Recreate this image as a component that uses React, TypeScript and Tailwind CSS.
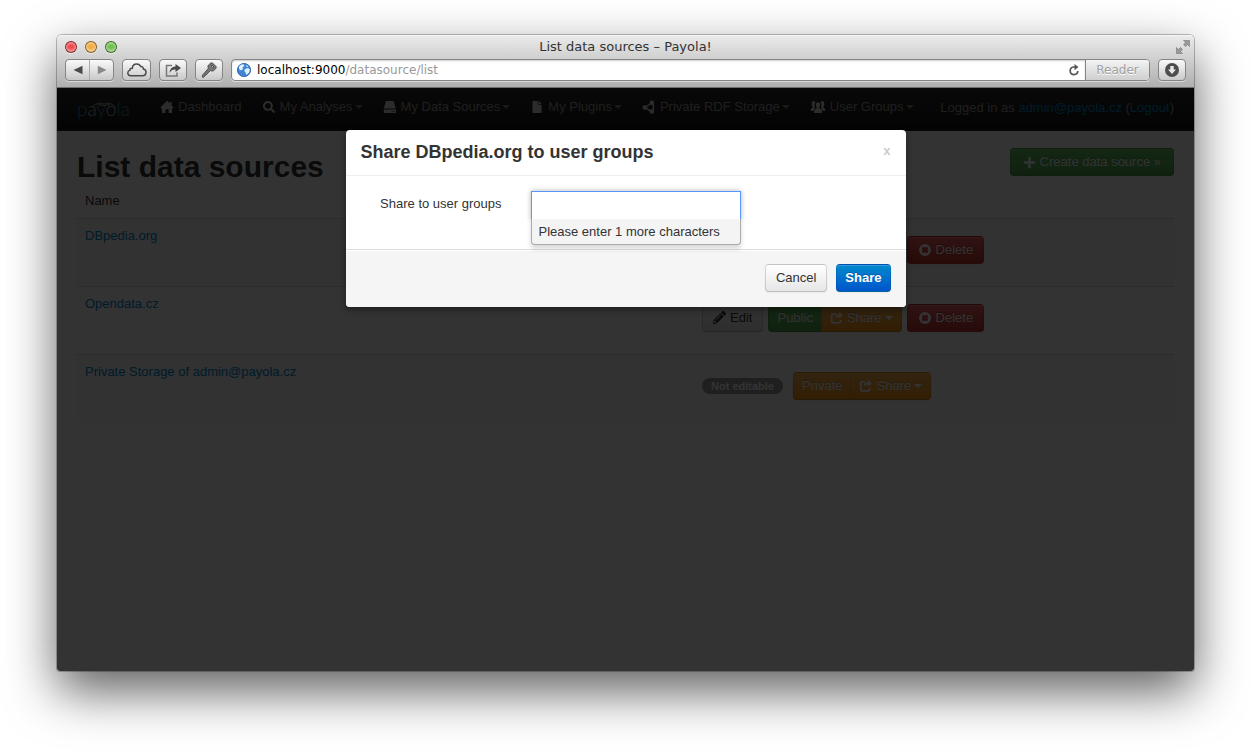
import React from "react";
import { FaSearch, FaFile, FaPlus, FaPencilAlt } from "react-icons/fa";

const toolButton =
  "flex h-[22px] shrink-0 items-center justify-center rounded-[4px] border border-[#848484] bg-linear-to-b from-[#fafafa] to-[#c9c9c9] text-[#4a4a4a] shadow-[0_1px_0_rgba(255,255,255,0.5)]";

const btn =
  "flex h-7 items-center whitespace-nowrap rounded-[4px] border border-black/10 border-b-black/25 leading-[18px] bg-linear-to-b shadow-[inset_0_1px_0_rgba(255,255,255,0.2),0_1px_2px_rgba(0,0,0,0.05)]";
const white = "text-white [text-shadow:0_-1px_0_rgba(0,0,0,0.25)]";
const plain = "px-[10px] from-white to-[#e6e6e6] text-[#333] border-black/15";
const green = "from-[#62c462] to-[#51a351] " + white;
const orange = "from-[#fbb450] to-[#f89406] " + white;
const red = "from-[#ee5f5b] to-[#bd362f] " + white;

function Caret() {
  return <span className="ml-[3px] border-x-4 border-t-4 border-x-transparent border-t-current" />;
}

function HomeIcon() {
  return (
    <svg viewBox="0 0 14 14" className="h-[14px] w-[14px]" fill="currentColor">
      <path d="M7 .8 9.800 3.600V1.800h1.800v3.600L13.600 7.400l-.9.900H12V13H8.600V9.200H5.400V13H2V8.300H1.300L.4 7.400z" />
    </svg>
  );
}

function DriveIcon() {
  return (
    <svg viewBox="0 0 14 14" className="h-[14px] w-[14px]" fill="currentColor">
      <path d="M3 1h7.500l2.300 7.500H.8z" />
      <path fillRule="evenodd" d="M.8 9.500h12.200v3.500H.8zM8.500 11v1h1v-1zM10.500 11v1h1v-1z" />
    </svg>
  );
}

function NodesIcon() {
  return (
    <svg viewBox="0 0 14 14" className="h-[14px] w-[14px]" fill="currentColor">
      <circle cx="2.800" cy="7.500" r="2.300" />
      <circle cx="9.800" cy="2.800" r="2.300" />
      <circle cx="9.800" cy="11.500" r="2.300" />
      <path d="m3 7.500 6.500-4.500M3 7.500l6.500 4M10.500 3q2.200 4.200 0 8.500" fill="none" stroke="currentColor" strokeWidth="1.500" />
    </svg>
  );
}

function GroupIcon() {
  return (
    <svg viewBox="0 0 16 14" className="h-[14px] w-4" fill="currentColor">
      <path d="M3.400 1.200c1 0 1.800.4 2.100 1.200C4.300 3.500 4.200 5.600 5 7l-.6.900c.8.600 1 .9.100 1.300-.9.400-1.300.8-1.300 1.800H.8V9.300c0-.8 1.600-.9 1.900-1.700.1-.6-.8-1.200-.9-3C1.700 2.300 2.200 1.200 3.400 1.200z" />
      <path d="M12.600 1.200c-1 0-1.800.4-2.100 1.200 1.200 1.100 1.300 3.200.5 4.600l.6.900c-.8.600-1 .9-.1 1.300.9.400 1.300.8 1.300 1.800h2.400V9.300c0-.8-1.600-.9-1.900-1.700-.1-.6.8-1.200.9-3 .1-2.300-.4-3.400-1.600-3.400z" />
      <path d="M8 2.300c1.500 0 2.200 1 2.100 2.600-.1 1.300-.8 2-.9 2.700-.2 1.300 2.700 1.500 2.700 3V13H4.100v-2.400c0-1.500 2.900-1.700 2.700-3-.1-.7-.8-1.400-.9-2.700C5.800 3.300 6.500 2.300 8 2.300z" />
    </svg>
  );
}

function ShareIcon() {
  return (
    <svg viewBox="0 0 14 14" className="h-[14px] w-[14px]">
      <path d="M6 2.800H3.200a1.500 1.500 0 0 0-1.500 1.500v6a1.500 1.500 0 0 0 1.500 1.500h6a1.500 1.500 0 0 0 1.500-1.500V9" fill="none" stroke="currentColor" strokeWidth="1.800" />
      <path d="M9 .8 12.800 4.300 9 7.800V5.600C7 5.600 5.700 6.500 4.800 8 4.800 5 6.300 3.200 9 3z" fill="currentColor" />
    </svg>
  );
}

function RemoveIcon() {
  return (
    <svg viewBox="0 0 14 14" className="h-[14px] w-[14px]" fill="currentColor">
      <path fillRule="evenodd" d="M7 1a6 6 0 1 0 0 12A6 6 0 0 0 7 1zM5.200 3.800 7 4.600l1.800-.8 1.400 1.400L9.400 7l.8 1.800-1.400 1.400L7 9.400l-1.800.8-1.400-1.400L4.600 7l-.8-1.800z" />
    </svg>
  );
}

function Logo() {
  return (
    <a href="#" className="relative mr-5 block w-[53px] font-['Lato',sans-serif] text-[19px] leading-[42px] font-light text-[#2d8da5]">
      p<span className="text-[#bbb]">a</span>y<span className="text-[#bbb]">o</span>la
      <svg viewBox="0 0 26 7" className="absolute top-[14px] left-[14px] h-[7px] w-[26px]" fill="none" stroke="#aaa">
        <path d="M1 5.500Q4 1.500 7.500 1.500q2.700-1.500 5.500.8 2.800-2.300 5.500-.8 3.500 0 6.500 4M7 3q3-1 6 .8 3-1.800 6-.8" />
      </svg>
    </a>
  );
}

type NavItem = { label: string; icon: React.ReactNode; menu?: boolean };
const nav: NavItem[] = [
  { label: "Dashboard", icon: <HomeIcon /> },
  { label: "My Analyses", icon: <FaSearch size={12} />, menu: true },
  { label: "My Data Sources", icon: <DriveIcon />, menu: true },
  { label: "My Plugins", icon: <FaFile size={12} />, menu: true },
  { label: "Private RDF Storage", icon: <NodesIcon />, menu: true },
  { label: "User Groups", icon: <GroupIcon />, menu: true },
];

function NavBar() {
  return (
    <nav className="flex h-[43px] items-start border-b border-[#252525] bg-linear-to-b from-[#2a2a2a] to-[#151515] px-5 text-[#999]">
      <Logo />
      <ul className="flex">
        {nav.map((item) => (
          <li key={item.label}>
            <a href="#" className="flex h-[38px] items-center whitespace-nowrap px-[10px]">
              <span className="mr-1 flex min-w-[14px] justify-center text-[#ddd]">{item.icon}</span>
              {item.label}
              {item.menu && <span className="ml-[2px] border-x-4 border-t-4 border-x-transparent border-t-[#777]" />}
            </a>
          </li>
        ))}
      </ul>
      <p className="ml-auto whitespace-nowrap leading-[40px]">
        Logged in as <a href="#" className="text-[#0088cc]">admin@payola.cz</a> (<a href="#" className="text-[#0088cc]">Logout</a>)
      </p>
    </nav>
  );
}

function ShareGroup({ label, tone }: { label: string; tone: string }) {
  return (
    <div className="flex">
      <button className={`${btn} ${tone} rounded-r-none border-r-0 px-2`}>{label}</button>
      <button className={`${btn} ${orange} rounded-l-none px-2`}>
        <span className="mr-[3px]"><ShareIcon /></span>Share<Caret />
      </button>
    </div>
  );
}

function DeleteButton() {
  return (
    <button className={`${btn} ${red} px-[10px]`}>
      <span className="mr-1"><RemoveIcon /></span>Delete
    </button>
  );
}

function SourceRow({ name, editable }: { name: string; editable: boolean }) {
  return (
    <tr className="h-[68px] border-t border-[#ddd] align-top odd:bg-[#f9f9f9]">
      <td className="p-2 leading-[18px]">
        <a href="#" className="text-[#0088cc]">{name}</a>
      </td>
      <td className="px-2 pt-[17px]">
        {editable ? (
          <div className="flex gap-[5px]">
            <button className={`${btn} ${plain}`}>
              <FaPencilAlt size={13} className="mr-1" />Edit
            </button>
            <ShareGroup label="Public" tone={green} />
            <DeleteButton />
          </div>
        ) : (
          <div className="flex items-center gap-[10px]">
            <span className="whitespace-nowrap rounded-full bg-[#999] px-[9px] text-[11px] leading-4 font-bold text-white">Not editable</span>
            <ShareGroup label="Private" tone={orange} />
          </div>
        )}
      </td>
    </tr>
  );
}

function ShareDialog() {
  return (
    <div role="dialog" aria-labelledby="share-title" className="absolute inset-x-0 top-[42px] mx-auto w-[560px] rounded-[4px] bg-white text-[#333] shadow-[0_3px_7px_rgba(0,0,0,0.4)]">
      <div className="flex justify-between border-b border-[#eee] px-[15px] py-[9px]">
        <h3 id="share-title" className="text-[18px] leading-[27px] font-bold">Share DBpedia.org to user groups</h3>
        <button className="h-6 text-[13px] leading-6 font-bold text-[#ccc]">x</button>
      </div>
      <div className="flex h-[73px] pt-[15px]">
        <label htmlFor="groups" className="w-[156px] text-right leading-[26px]">Share to user groups</label>
        <div className="relative ml-[29px] h-[30px] w-[210px]">
          <input id="groups" type="text" className="h-[30px] w-full border border-[#5897fb] bg-white px-1 shadow-[0_0_5px_rgba(0,0,0,0.3)] outline-none" />
          <div className="absolute inset-x-0 top-[28px] rounded-b-[4px] border border-t-0 border-[#aaa] bg-[#f4f4f4] px-[7px] pt-1 pb-[3px] leading-[18px] shadow-[0_4px_5px_rgba(0,0,0,0.15)]">
            Please enter 1 more characters
          </div>
        </div>
      </div>
      <div className="flex justify-end gap-[9px] rounded-b-[4px] border-t border-[#ddd] bg-[#f5f5f5] px-[15px] pt-[14px] pb-[15px] shadow-[inset_0_1px_0_#fff]">
        <button className={`${btn} ${plain}`}>Cancel</button>
        <button className={`${btn} ${white} from-[#0088cc] to-[#0055cc] px-2 font-bold`}>Share</button>
      </div>
    </div>
  );
}

function Light({ tone }: { tone: string }) {
  return <span className={`h-3 w-3 rounded-full border border-black/45 shadow-[inset_0_2px_2px_rgba(255,255,255,0.35),inset_0_-2px_2px_rgba(255,255,255,0.45),0_1px_0_rgba(255,255,255,0.5)] ${tone}`} />;
}

function BrowserChrome() {
  return (
    <header className="rounded-t-[5px] border-b border-[#6f6f6f] bg-linear-to-b from-[#ebebeb] to-[#b0b0b0] px-2 pb-[6px] font-['DejaVu_Sans',sans-serif] text-[12px] shadow-[inset_0_1px_0_#f6f6f6]">
      <div className="grid h-6 grid-cols-[1fr_auto_1fr] items-center">
        <div className="flex gap-2">
          <Light tone="bg-[#ee4b50]" />
          <Light tone="bg-[#f2ac43]" />
          <Light tone="bg-[#72bf51]" />
        </div>
        <h2 className="text-[13px] leading-5 text-[#333]">List data sources – Payola!</h2>
        <svg viewBox="0 0 14 14" className="-mr-1 h-[14px] w-[14px] justify-self-end" fill="#999" stroke="#777" strokeWidth=".6">
          <path d="M7.500.5h6v6l-2-2-2 2-2-2 2-2zM.5 13.500v-6l2 2 2-2 2 2-2 2 2 2z" />
        </svg>
      </div>
      <div className="flex gap-2">
        <div className={`${toolButton} w-[49px]`}>
          <button aria-label="Back" className="flex h-full flex-1 items-center justify-center border-r border-[#aaa]">
            <svg viewBox="0 0 10 10" className="h-[10px] w-[10px]" fill="currentColor"><path d="M9.500.8v8.400L.5 5z" /></svg>
          </button>
          <button aria-label="Forward" className="flex h-full flex-1 items-center justify-center text-[#888]">
            <svg viewBox="0 0 10 10" className="h-[10px] w-[10px]" fill="currentColor"><path d="M.8.8v8.400L9.500 5z" /></svg>
          </button>
        </div>
        <button aria-label="Cloud tabs" className={`${toolButton} w-[29px]`}>
          <svg viewBox="0 0 20 14" className="h-[14px] w-5" fill="none" stroke="currentColor" strokeWidth="1.500">
            <path d="M5 12.800h10.500a3.400 3.400 0 0 0 .9-6.700c0-1.800-1.300-2.800-2.700-2.600C12.900 1.900 11.400 1 9.700 1 7.200 1 5.500 2.800 5.300 5.200 3.700 5 2.900 6 3 7.100 1.600 7.500.8 8.700.8 9.900c0 1.700 1.500 2.900 4.200 2.900z" />
          </svg>
        </button>
        <button aria-label="Share page" className={`${toolButton} w-7`}>
          <svg viewBox="0 0 16 14" className="h-[14px] w-4">
            <path d="M7 2.500H1.500v10.500h10.500V9.500" fill="none" stroke="#777" strokeWidth="1.500" />
            <path d="M10.500 1 16 5l-5.500 4V6.500C7.800 6.400 5.800 7.500 4.500 10 4.700 6.300 6.800 3.800 10.500 3.500z" fill="currentColor" />
          </svg>
        </button>
        <button aria-label="Passwords" className={`${toolButton} w-7`}>
          <svg viewBox="0 0 16 16" className="h-4 w-4" fill="#777" stroke="#444" strokeWidth=".9">
            <path fillRule="evenodd" d="m9.500 1.200 1.800-.4 3.900 3.900-.4 1.800-2.300 2.300-1.800.3-1-.9-4.700 4.800-1 .2-.3 1.100-1 .9H1.500v-1.900L7.600 6 6.800 5l.4-1.600zM11 3l-.9.900 2 2 .9-.9z" />
          </svg>
        </button>
        <div className="flex h-[22px] min-w-0 flex-1 rounded-[4px] border border-[#858585] bg-white shadow-[0_1px_0_rgba(255,255,255,0.5)]">
          <div className="flex min-w-0 flex-1 items-center gap-[6px] rounded-l-[3px] px-[5px] shadow-[inset_0_1px_2px_rgba(0,0,0,0.2)]">
            <svg viewBox="0 0 14 14" className="h-[14px] w-[14px] shrink-0">
              <circle cx="7" cy="7" r="6.600" fill="#3f86d6" stroke="#2257a0" strokeWidth=".8" />
              <path d="M2 3.500Q4 1 6.500 1.300L7.300 3 5.500 4.300 6 6 4 7.500 2 6zM8 6l3-1 2 1.500-.8 3L9.500 12 8.500 9.500 7.300 8zM9 2l2.500 1.300-1.500.9z" fill="#dff0ff" />
            </svg>
            <span className="truncate leading-5 text-[#999]"><span className="text-black">localhost:9000</span>/datasource/list</span>
            <button aria-label="Reload" className="ml-auto text-[#555]">
              <svg viewBox="0 0 12 12" className="h-3 w-3">
                <path d="M7 3H5.600a3.800 3.800 0 1 0 4.200 4" fill="none" stroke="currentColor" strokeWidth="1.700" />
                <path d="m6.500 0 4 3-4 3.200z" fill="currentColor" />
              </svg>
            </button>
          </div>
          <button className="w-16 rounded-r-[3px] border-l border-[#858585] bg-linear-to-b from-[#f4f4f4] to-[#cfcfcf] leading-5 text-[#a0a0a0] [text-shadow:0_1px_0_#fff]">Reader</button>
        </div>
        <button aria-label="Downloads" className={`${toolButton} w-7`}>
          <svg viewBox="0 0 14 14" className="h-[14px] w-[14px]">
            <circle cx="7" cy="7" r="7" fill="#4d4d4d" />
            <path d="M5.300 3h3.400v3.500h2.300L7 11 3 6.500h2.300z" fill="#e8e8e8" />
          </svg>
        </button>
      </div>
    </header>
  );
}

export default function App() {
  return (
    <div className="flex min-h-screen bg-white px-[57px] pt-[35px] pb-[79px] font-['Liberation_Sans',Arial,sans-serif] text-[13px] leading-[18px]">
      <div className="flex min-w-0 flex-1 flex-col rounded-t-[5px] rounded-b-[3px] shadow-[0_0_0_1px_rgba(0,0,0,0.25),0_20px_50px_rgba(0,0,0,0.63)]">
        <BrowserChrome />
        <div className="relative flex flex-1 flex-col overflow-hidden rounded-b-[3px] bg-white">
          <NavBar />
          <main className="px-5 text-[#333]">
            <div className="flex items-start justify-between pt-[17px]">
              <h1 className="text-[30px] leading-[38px] font-bold">List data sources</h1>
              <button className={`${btn} ${green} px-3`}>
                <FaPlus size={13} className="mr-1" />Create data source »
              </button>
            </div>
            <table className="w-full table-fixed border-collapse">
              <thead>
                <tr className="h-8">
                  <th className="w-9/16 px-2 pb-[2px] text-left align-middle font-normal">Name</th>
                  <th />
                </tr>
              </thead>
              <tbody>
                <SourceRow name="DBpedia.org" editable />
                <SourceRow name="Opendata.cz" editable />
                <SourceRow name="Private Storage of admin@payola.cz" editable={false} />
              </tbody>
            </table>
          </main>
          <div className="absolute inset-0 bg-black/80" />
          <ShareDialog />
        </div>
      </div>
    </div>
  );
}
